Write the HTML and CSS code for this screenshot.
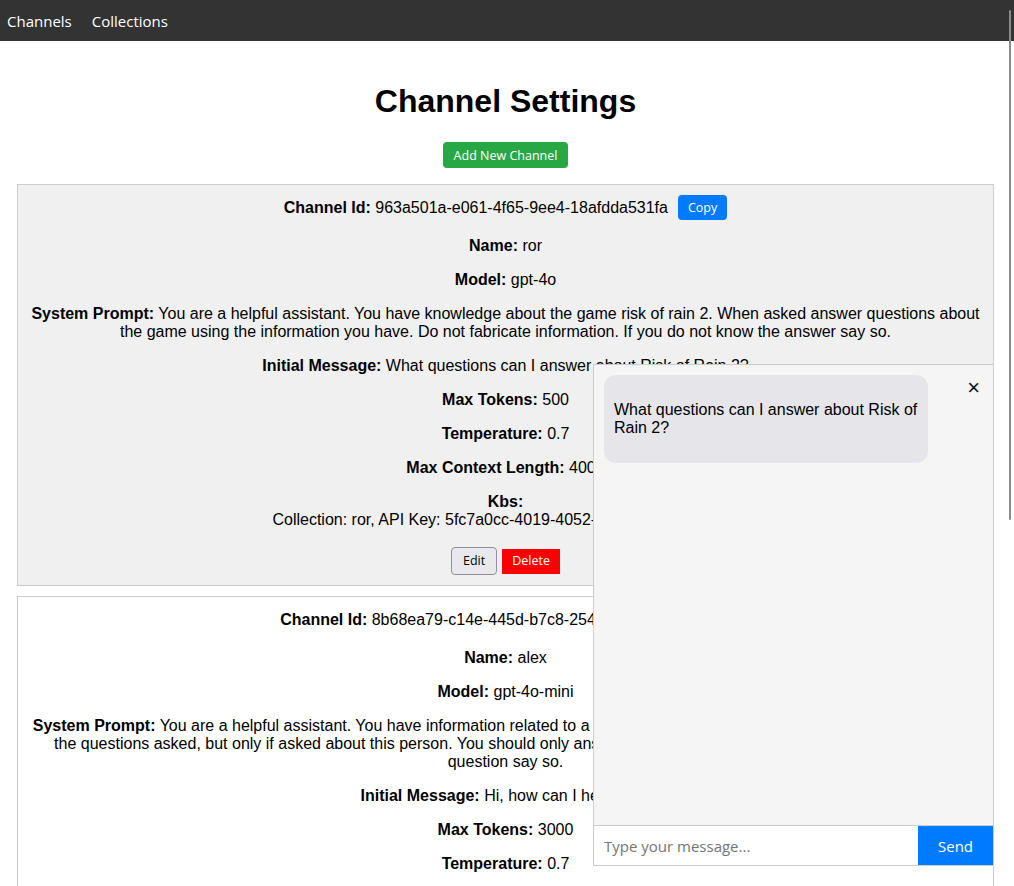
FILE: index.html
```html
<!DOCTYPE html>
<html lang="en">
<head>
<meta charset="utf-8">
<title>Channel Settings</title>
<link rel="stylesheet" href="styles.css">
</head>
<body>
<nav class="topnav">
  <a class="topnav-link" href="#">Channels</a>
  <a class="topnav-link" href="#">Collections</a>
</nav>

<main class="page">
  <h1 class="page-title">Channel Settings</h1>
  <div class="toolbar">
    <button class="btn btn-add" type="button">Add New Channel</button>
  </div>

  <div class="channel-list">
    <section class="channel-card channel-card--active">
      <div class="id-row">
        <p class="field"><strong>Channel Id:</strong> 963a501a-e061-4f65-9ee4-18afdda531fa</p>
        <button class="btn btn-copy" type="button">Copy</button>
      </div>
      <p class="field"><strong>Name:</strong> ror</p>
      <p class="field"><strong>Model:</strong> gpt-4o</p>
      <p class="field"><strong>System Prompt:</strong> You are a helpful assistant. You have knowledge about the game risk of rain 2. When asked answer questions about the game using the information you have. Do not fabricate information. If you do not know the answer say so.</p>
      <p class="field"><strong>Initial Message:</strong> What questions can I answer about Risk of Rain 2?</p>
      <p class="field"><strong>Max Tokens:</strong> 500</p>
      <p class="field"><strong>Temperature:</strong> 0.7</p>
      <p class="field"><strong>Max Context Length:</strong> 4000</p>
      <div class="field kbs">
        <strong>Kbs:</strong>
        <div class="kb-item">Collection: ror, API Key: 5fc7a0cc-4019-4052-9b1e-7d3f0a6c2e81</div>
      </div>
      <div class="card-actions">
        <button class="btn btn-edit" type="button">Edit</button>
        <button class="btn btn-delete" type="button">Delete</button>
      </div>
    </section>

    <section class="channel-card">
      <div class="id-row">
        <p class="field"><strong>Channel Id:</strong> 8b68ea79-c14e-445d-b7c8-2549d3f1e0ab</p>
        <button class="btn btn-copy" type="button">Copy</button>
      </div>
      <p class="field"><strong>Name:</strong> alex</p>
      <p class="field"><strong>Model:</strong> gpt-4o-mini</p>
      <p class="field"><strong>System Prompt:</strong> You are a helpful assistant. You have information related to a person named Alex. Use the information given to reply the questions asked, but only if asked about this person. You should only answer about Alex. If you do not know the answer to a question say so.</p>
      <p class="field"><strong>Initial Message:</strong> Hi, how can I help you?</p>
      <p class="field"><strong>Max Tokens:</strong> 3000</p>
      <p class="field"><strong>Temperature:</strong> 0.7</p>
      <p class="field"><strong>Max Context Length:</strong> 4000</p>
      <div class="field kbs">
        <strong>Kbs:</strong>
        <div class="kb-item">Collection: alex, API Key: 2d91c4e7-8a3b-4f10-b6e2-93c5a7d1f804</div>
      </div>
      <div class="card-actions">
        <button class="btn btn-edit" type="button">Edit</button>
        <button class="btn btn-delete" type="button">Delete</button>
      </div>
    </section>
  </div>
</main>

<aside class="chat-panel">
  <button class="chat-close" type="button" aria-label="Close">&times;</button>
  <div class="chat-messages">
    <div class="chat-bubble"><p>What questions can I answer about Risk of Rain 2?</p></div>
  </div>
  <form class="chat-input-row" onsubmit="return false">
    <input class="chat-input" type="text" placeholder="Type your message...">
    <button class="chat-send" type="submit">Send</button>
  </form>
</aside>

<div class="scroll-thumb"></div>
</body>
</html>
```
FILE: styles.css
```css
html, body {
  margin: 0;
  padding: 0;
  background: #ffffff;
}

body {
  font-family: "Liberation Sans", Arial, sans-serif;
  font-size: 16px;
  line-height: 18px;
  color: #000;
}

/* ---------- top navigation ---------- */
.topnav {
  height: 41px;
  background: #333333;
  display: flex;
  align-items: center;
  gap: 20px;
  padding: 0 7px;
}

.topnav-link {
  font-family: "Open Sans", "Noto Sans", sans-serif;
  font-size: 15px;
  color: #ffffff;
  text-decoration: none;
}

/* ---------- page ---------- */
.page {
  padding: 20px 20px 40px 17px;
}

.page-title {
  margin: 22px 0 22px;
  font-size: 32px;
  line-height: 37px;
  font-weight: bold;
  text-align: center;
}

.toolbar {
  display: flex;
  justify-content: center;
  margin-bottom: 16px;
}

.btn {
  font-family: "Open Sans", "Noto Sans", sans-serif;
  font-size: 12.5px;
  line-height: 16px;
  padding: 5px 10px;
  border: none;
  cursor: pointer;
}

.btn-add {
  background: #28a745;
  color: #fff;
  border-radius: 4px;
  padding: 6px 10px 4px;
  width: 125px;
}

/* ---------- channel cards ---------- */
.channel-list {
  display: flex;
  flex-direction: column;
  gap: 10px;
}

.channel-card {
  border: 1px solid #cccccc;
  background: #ffffff;
  padding: 10px;
  text-align: center;
}

.channel-card--active {
  background: #f0f0f0;
}

.field {
  margin: 16px 0;
}

.id-row {
  display: flex;
  justify-content: center;
  align-items: center;
  gap: 10px;
  height: 25px;
  margin-bottom: 17px;
}

.id-row .field {
  margin: 0;
}

.btn-copy {
  background: #007bff;
  color: #fff;
  border-radius: 4px;
  height: 25px;
  padding: 1px 10px 0;
}

.card-actions {
  display: flex;
  justify-content: center;
  align-items: center;
  gap: 5px;
  margin-top: 18px;
}

.btn-edit {
  background: #e9e9ed;
  color: #000;
  border: 1px solid #8f8f9d;
  border-radius: 4px;
  height: 28px;
  padding: 0 11px;
}

.btn-delete {
  background: #ff0000;
  color: #fff;
  height: 25px;
  padding: 0 10px;
}

/* ---------- chat panel ---------- */
.chat-panel {
  position: fixed;
  right: 20px;
  bottom: 20px;
  width: 401px;
  height: 502px;
  box-sizing: border-box;
  border: 1px solid #cccccc;
  background: #f5f5f5;
  display: flex;
  flex-direction: column;
}

.chat-close {
  position: absolute;
  top: 12px;
  right: 13px;
  background: none;
  border: none;
  padding: 0;
  font-family: "Liberation Sans", Arial, sans-serif;
  font-size: 22px;
  line-height: 22px;
  color: #111;
  cursor: pointer;
}

.chat-messages {
  flex: 1;
  padding: 10px;
  overflow: hidden;
}

.chat-bubble {
  display: inline-block;
  max-width: 304px;
  padding: 0 10px;
  background: #e5e5ea;
  border-radius: 12px;
  overflow: hidden;
}

.chat-bubble p {
  margin: 26px 0;
}

.chat-input-row {
  display: flex;
  height: 40px;
  margin: 0;
  border-top: 1px solid #cccccc;
  box-sizing: border-box;
}

.chat-input {
  flex: 1;
  min-width: 0;
  border: none;
  outline: none;
  padding: 0 10px;
  margin: 0;
  font-family: "Open Sans", "Noto Sans", sans-serif;
  font-size: 15px;
  background: #ffffff;
  color: #000;
}

.chat-input::placeholder {
  color: #757575;
}

.chat-send {
  width: 75px;
  border: none;
  margin: 0;
  background: #007bff;
  color: #fff;
  font-family: "Open Sans", "Noto Sans", sans-serif;
  font-size: 15px;
  cursor: pointer;
}

/* ---------- overlay scrollbar thumb ---------- */
.scroll-thumb {
  position: fixed;
  top: 10px;
  right: 3px;
  width: 2px;
  height: 510px;
  background: #8a8a8a;
  border-radius: 1px;
}
```
